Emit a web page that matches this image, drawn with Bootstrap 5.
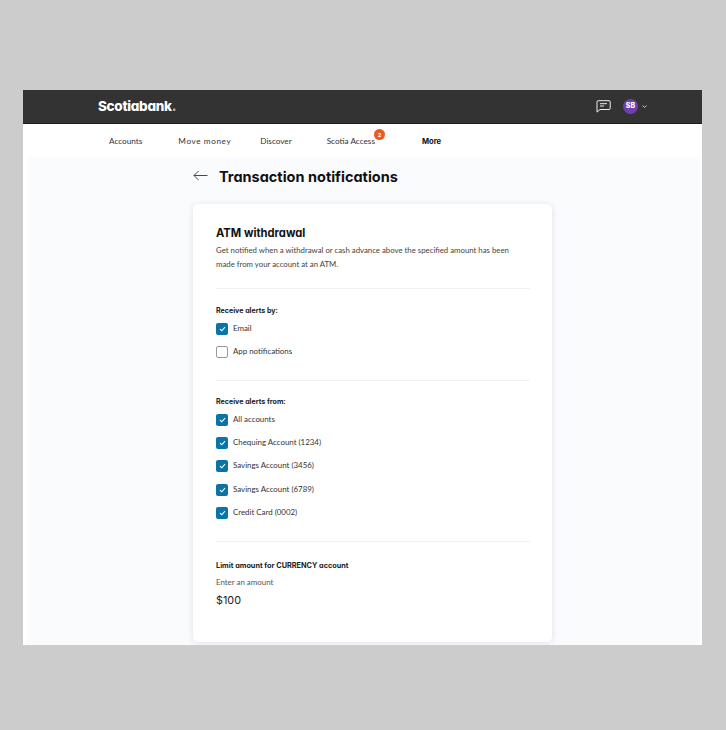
<!DOCTYPE html>
<html lang="en">
<head>
    <meta charset="UTF-8">
    <meta name="viewport" content="width=device-width, initial-scale=1.0">
    <title>Transaction notifications</title>
    <link href="https://cdn.jsdelivr.net/npm/bootstrap@5.3.3/dist/css/bootstrap.min.css" rel="stylesheet">
    <style>
        body {
            background: #cccccc;
            padding: 90px 24px 85px 23px;
            font-family: "Lato", "Liberation Sans", sans-serif;
            color: #333;
        }
        .app-frame {
            height: 555px;
            overflow: hidden;
            background: #fff;
        }
        .top-bar {
            height: 34px;
            background: #333333;
            border-bottom: 1px solid #1c1c1c;
            padding: 0 55px 0 75px;
        }
        .top-actions { gap: 12px; }
        .brand-name {
            font-family: "Inter", sans-serif;
            font-feature-settings: "cv11";
            font-weight: 800;
            font-size: 13.5px;
            letter-spacing: -0.3px;
            color: #fff;
        }
        .brand-name span { color: #bbb; }
        .avatar-dot {
            width: 15px;
            height: 15px;
            background: #6f3fb0;
            color: #fff;
            font-family: "Inter", sans-serif;
            font-size: 7px;
            font-weight: 800;
        }
        .sub-nav {
            height: 33px;
            background: #fff;
            padding: 2px 0 0 86px;
            font-size: 8.2px;
            color: #333;
        }
        .sub-nav a { color: #333; text-decoration: none; }
        .sub-nav .nav-strong { font-family: "Inter", sans-serif; font-weight: 700; font-size: 7.6px; color: #111; }
        .nav-gap-36 { margin-right: 36px; }
        .nav-gap-35 { margin-right: 35px; }
        .nav-gap-47 { margin-right: 47px; }
        .nav-wide { margin-right: 29px; letter-spacing: .6px; }
        .count-dot {
            top: -6px;
            right: -10px;
            width: 11px;
            height: 11px;
            background: #ec5a24;
            color: #fff;
            font-size: 6px;
            font-weight: 700;
            line-height: 11px;
            text-align: center;
        }
        .content-area {
            height: 488px;
            margin: 0 2px 0 4px;
            background: #fafbfd;
        }
        .page-wrap { width: 359px; margin-left: 166px; }
        .title-row { height: 47px; padding-bottom: 8px; }
        .back-arrow { margin: 0 11px 2px 0; }
        .page-title {
            font-family: "Inter", sans-serif;
            font-feature-settings: "cv11";
            font-weight: 700;
            font-size: 14.5px;
            color: #111;
            margin: 0;
        }
        .panel-box {
            height: 438px;
            background: #fff;
            border-radius: 5px;
            box-shadow: 0 1px 6px rgba(40, 50, 90, .13);
            padding: 22px 22px 22px 23px;
        }
        .panel-title {
            font-family: "Inter", sans-serif;
            font-feature-settings: "cv11";
            font-weight: 700;
            font-size: 11.2px;
            color: #111;
            margin: 0 0 4px;
            line-height: 14px;
        }
        .panel-text {
            max-width: 296px;
            font-size: 7.8px;
            line-height: 13.5px;
            color: #444;
            margin: 0;
        }
        .panel-rule {
            margin: 0;
            border: 0;
            border-top: 1px solid #eef0f3;
            opacity: 1;
        }
        .rule-top { margin-top: 17px; }
        .rule-mid { margin-top: 17px; }
        .group-label {
            font-family: "Inter", sans-serif;
            font-feature-settings: "cv11";
            font-weight: 700;
            font-size: 7.1px;
            color: #222;
            line-height: 12px;
        }
        .label-first { margin-top: 16px; }
        .label-second { margin-top: 15px; }
        .label-third { margin: 18px 0 4px; font-size: 7.3px; }
        .check-row { height: 23.2px; font-size: 7.9px; color: #333; gap: 5px; }
        .check-box {
            width: 12px;
            height: 12px;
            border-radius: 2px;
            background: #0a74a6;
            flex-shrink: 0;
        }
        .check-box.is-off {
            background: #fff;
            border: 1px solid #999;
        }
        .amount-hint { font-size: 7.9px; color: #555; line-height: 12px; margin-bottom: 6px; }
        .amount-value { font-family: "Inter", sans-serif; font-size: 10.8px; color: #222; line-height: 14px; }
    </style>
</head>
<body>
    <div class="app-frame">
        <header class="top-bar d-flex align-items-center justify-content-between">
            <div class="brand-name">Scotiabank<span>.</span></div>
            <div class="top-actions d-flex align-items-center">
                <svg width="15" height="13" viewBox="0 0 15 13" fill="none" stroke="#eee" stroke-width="1">
                    <path d="M2.5 .7h10.5a1.2 1.2 0 0 1 1.2 1.2v6.4a1.2 1.2 0 0 1-1.2 1.2H4l-3 2.6V2a1.3 1.3 0 0 1 1.5-1.3z"/>
                    <path d="M4 3.7h7M4 6h4"/>
                </svg>
                <div class="d-flex align-items-center gap-1">
                    <span class="avatar-dot rounded-circle d-flex align-items-center justify-content-center">SB</span>
                    <svg width="5" height="3" viewBox="0 0 5 3" fill="none" stroke="#ddd" stroke-width=".9"><path d="M.5.5 2.5 2.4 4.5.5"/></svg>
                </div>
            </div>
        </header>
        <nav class="sub-nav d-flex align-items-center">
            <a href="#" class="nav-gap-36">Accounts</a>
            <a href="#" class="nav-wide">Move money</a>
            <a href="#" class="nav-gap-35">Discover</a>
            <a href="#" class="position-relative nav-gap-47">Scotia Access<span class="count-dot position-absolute rounded-circle">2</span></a>
            <a href="#" class="nav-strong">More</a>
        </nav>
        <div class="content-area">
            <main class="page-wrap">
                <div class="title-row d-flex align-items-center">
                    <svg class="back-arrow" width="15" height="11" viewBox="0 0 15 11" fill="none" stroke="#333" stroke-width=".9">
                        <path d="M14.5 5.5H1M5.5 1 1 5.5 5.5 10"/>
                    </svg>
                    <h1 class="page-title">Transaction notifications</h1>
                </div>
                <section class="panel-box">
                    <h2 class="panel-title">ATM withdrawal</h2>
                    <p class="panel-text">Get notified when a withdrawal or cash advance above the specified amount has been made from your account at an ATM.</p>
                    <hr class="panel-rule rule-top">
                    <div class="group-label label-first">Receive alerts by:</div>
                    <div class="check-row d-flex align-items-center"><span class="check-box d-flex align-items-center justify-content-center"><svg width="7" height="6" viewBox="0 0 7 6" fill="none" stroke="#fff" stroke-width="1.1"><path d="M1 3l1.8 1.8L6 1.2"/></svg></span>Email</div>
                    <div class="check-row d-flex align-items-center"><span class="check-box is-off"></span>App notifications</div>
                    <hr class="panel-rule rule-mid">
                    <div class="group-label label-second">Receive alerts from:</div>
                    <div class="check-row d-flex align-items-center"><span class="check-box d-flex align-items-center justify-content-center"><svg width="7" height="6" viewBox="0 0 7 6" fill="none" stroke="#fff" stroke-width="1.1"><path d="M1 3l1.8 1.8L6 1.2"/></svg></span>All accounts</div>
                    <div class="check-row d-flex align-items-center"><span class="check-box d-flex align-items-center justify-content-center"><svg width="7" height="6" viewBox="0 0 7 6" fill="none" stroke="#fff" stroke-width="1.1"><path d="M1 3l1.8 1.8L6 1.2"/></svg></span>Chequing Account (1234)</div>
                    <div class="check-row d-flex align-items-center"><span class="check-box d-flex align-items-center justify-content-center"><svg width="7" height="6" viewBox="0 0 7 6" fill="none" stroke="#fff" stroke-width="1.1"><path d="M1 3l1.8 1.8L6 1.2"/></svg></span>Savings Account (3456)</div>
                    <div class="check-row d-flex align-items-center"><span class="check-box d-flex align-items-center justify-content-center"><svg width="7" height="6" viewBox="0 0 7 6" fill="none" stroke="#fff" stroke-width="1.1"><path d="M1 3l1.8 1.8L6 1.2"/></svg></span>Savings Account (6789)</div>
                    <div class="check-row d-flex align-items-center"><span class="check-box d-flex align-items-center justify-content-center"><svg width="7" height="6" viewBox="0 0 7 6" fill="none" stroke="#fff" stroke-width="1.1"><path d="M1 3l1.8 1.8L6 1.2"/></svg></span>Credit Card (0002)</div>
                    <hr class="panel-rule rule-mid">
                    <div class="group-label label-third">Limit amount for CURRENCY account</div>
                    <div class="amount-hint">Enter an amount</div>
                    <div class="amount-value">$100</div>
                </section>
            </main>
        </div>
    </div>
    <script src="https://cdn.jsdelivr.net/npm/bootstrap@5.3.3/dist/js/bootstrap.bundle.min.js"></script>
</body>
</html>
